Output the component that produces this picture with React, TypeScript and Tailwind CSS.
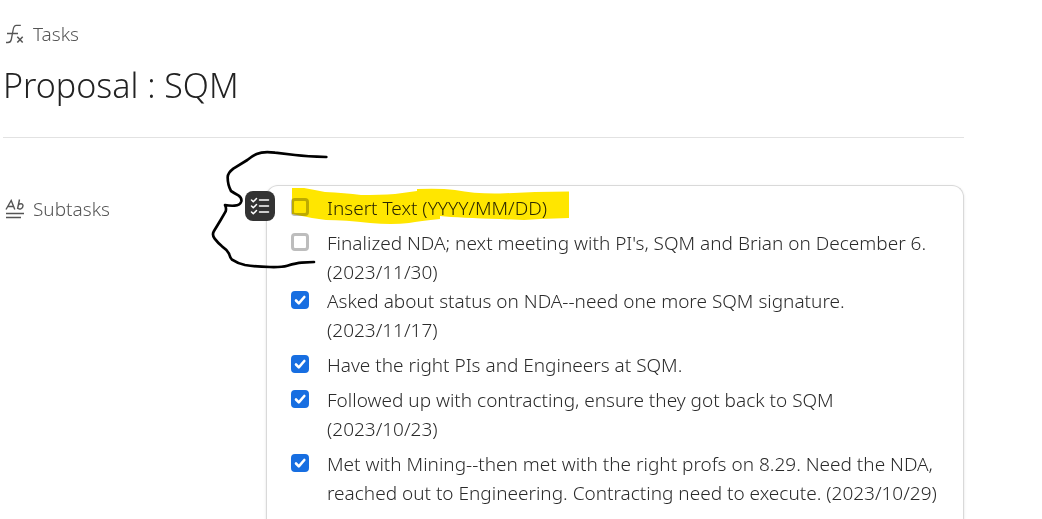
import { useState } from 'react'

interface Task {
  id: string
  text: string
  done: boolean
  tight?: boolean
}

const initialTasks: Task[] = [
  { id: 'insert', text: 'Insert Text (YYYY/MM/DD)', done: false },
  { id: 'nda', text: "Finalized NDA; next meeting with PI's, SQM and Brian on December 6. (2023/11/30)", done: false },
  { id: 'status', text: 'Asked about status on NDA--need one more SQM signature. (2023/11/17)', done: true, tight: true },
  { id: 'people', text: 'Have the right PIs and Engineers at SQM.', done: true },
  { id: 'contracting', text: 'Followed up with contracting, ensure they got back to SQM\n(2023/10/23)', done: true },
  { id: 'mining', text: 'Met with Mining--then met with the right profs on 8.29. Need the NDA, reached out to Engineering. Contracting need to execute. (2023/10/29)', done: true },
]

function FormulaIcon() {
  return (
    <svg className="w-5 h-5" viewBox="0 0 20 20" fill="none" stroke="#555" strokeWidth="1.3" aria-hidden="true">
      <path d="M1 18.500h2c2.200 0 2.900-1 3.300-3l1.900-10c.4-2.700 1.300-4.200 3.200-4.200h4.400M2 9.500h11" />
      <path d="M12.300 12.700l5.400 5.800M17.700 12.700l-5.400 5.800" strokeWidth="1.500" />
    </svg>
  )
}

function TextFieldIcon() {
  return (
    <svg className="w-5 h-5" viewBox="0 0 20 20" fill="none" stroke="#555" strokeWidth="1.400" aria-hidden="true">
      <path d="M1 10.500L6.200 1.500L9.800 10.500M3 7.500h5.500" />
      <path d="M14.500 0.500L12.500 10M13.200 6.500c1-2.300 4.800-2.600 4.800 0.200c0 3-4 4.600-5.300 2" />
      <path d="M1 14.500h18M1 18.500h15" strokeWidth="1.300" />
    </svg>
  )
}

function ChecklistIcon() {
  return (
    <svg className="w-5 h-5" viewBox="0 0 20 20" fill="none" stroke="#fff" strokeWidth="1.500" strokeLinecap="round" strokeLinejoin="round" aria-hidden="true">
      <path d="M1.500 4l1.800 1.800L6.500 2.500M1.500 10l1.800 1.800L6.500 8.500M1.500 16l1.800 1.800L6.500 14.500" />
      <path d="M9.500 4h9M9.500 10h9M9.500 16h9" />
    </svg>
  )
}

// Yellow marker swipe over the first row
function Highlight() {
  return (
    <svg className="absolute left-6 top-0 w-[280px] h-10 mix-blend-multiply pointer-events-none" viewBox="291 186 280 40" aria-hidden="true">
      <path
        fill="#ffe600"
        d="M292 188L304 188Q315 190 325 192Q345 193 361 195Q380 195 395 194L417 191V189Q440 188 455 190Q476 194 500 193.500L535 192L569 191.500V218L540 219L524 220L500 219Q460 218 440 216V219Q420 221 409 223Q392 225 370 223Q345 220 326 220Q310 218 292 214Z"
      />
    </svg>
  )
}

// Hand-drawn brace on the left of the list
function Brace() {
  return (
    <svg className="absolute -left-[67px] -top-[46px] w-[140px] h-[140px] pointer-events-none" viewBox="0 0 420 420" aria-hidden="true">
      <path
        fill="none"
        stroke="#000"
        strokeWidth="8"
        strokeLinecap="round"
        strokeLinejoin="round"
        d="M379 51Q320 49 285 45L225 38Q190 33 170 42Q155 49 142 60L100 86Q83 99 83 112Q83 135 93 153Q101 158 115 166Q126 173 124 184Q120 196 104 197Q90 198 75 195Q80 204 77 214L62 240L42 273Q35 284 44 296Q54 309 66 319Q81 329 87 341Q91 355 96 359Q112 370 135 375Q165 380 210 381Q245 382 262 377Q290 369 305 368L342 366"
      />
    </svg>
  )
}

export default function App() {
  const [tasks, setTasks] = useState(initialTasks)

  const toggle = (id: string) => {
    setTasks(prev => prev.map(t => (t.id === id ? { ...t, done: !t.done } : t)))
  }

  return (
    <main className="min-h-screen flex flex-col overflow-hidden bg-white pl-[3px] pr-[78px] pt-5 font-['Noto_Sans','Open_Sans',sans-serif] font-light text-[#2b2b2b]">
      {/* Title */}
      <header className="border-b border-[#e2e2e2] pb-[27px]">
        <div className="flex items-center gap-2 pl-0.5 text-[19px] leading-7 text-[#555]">
          <FormulaIcon />
          <span>Tasks</span>
        </div>
        <h1 className="mt-3 text-[34px] leading-[50px] font-light text-[#222]">Proposal : SQM</h1>
      </header>

      {/* Subtasks */}
      <section className="flex flex-1 pt-[47px]">
        <h2 className="flex w-[263px] shrink-0 items-center self-start gap-2 pl-0.5 pt-2.5 text-[19px] leading-7 font-light text-[#555]">
          <TextFieldIcon />
          <span>Subtasks</span>
        </h2>
        <div className="relative flex-1 rounded-t-xl border border-b-0 border-[#d9d9d9] pt-0.5 pl-6 pr-4 shadow-sm">
          <ul>
            {tasks.map(t => (
              <li key={t.id} className={t.tight ? '' : 'pt-1.5'}>
                <label className="flex items-start gap-[18px] text-[19px] leading-[29px]">
                  <span className="mt-1 grid shrink-0">
                    <input
                      type="checkbox"
                      checked={t.done}
                      onChange={() => toggle(t.id)}
                      className="col-start-1 row-start-1 appearance-none w-[18px] h-[18px] rounded border-3 border-[#bdbdbd] checked:border-[#176ee1] checked:bg-[#176ee1]"
                    />
                    {t.done && (
                      <svg className="col-start-1 row-start-1 w-[18px] h-[18px] pointer-events-none" viewBox="0 0 18 18" fill="none" aria-hidden="true">
                        <path d="M5 9.500l2.800 2.800L13.300 6" stroke="#fff" strokeWidth="2.600" strokeLinecap="round" strokeLinejoin="round" />
                      </svg>
                    )}
                  </span>
                  <span className="whitespace-pre-line">{t.text}</span>
                </label>
              </li>
            ))}
          </ul>
          <Highlight />
          <button
            type="button"
            aria-label="Checklist"
            className="absolute -left-[22px] top-[5px] grid w-[30px] h-[30px] place-items-center rounded-lg bg-[#333]"
          >
            <ChecklistIcon />
          </button>
          <Brace />
        </div>
      </section>
    </main>
  )
}
